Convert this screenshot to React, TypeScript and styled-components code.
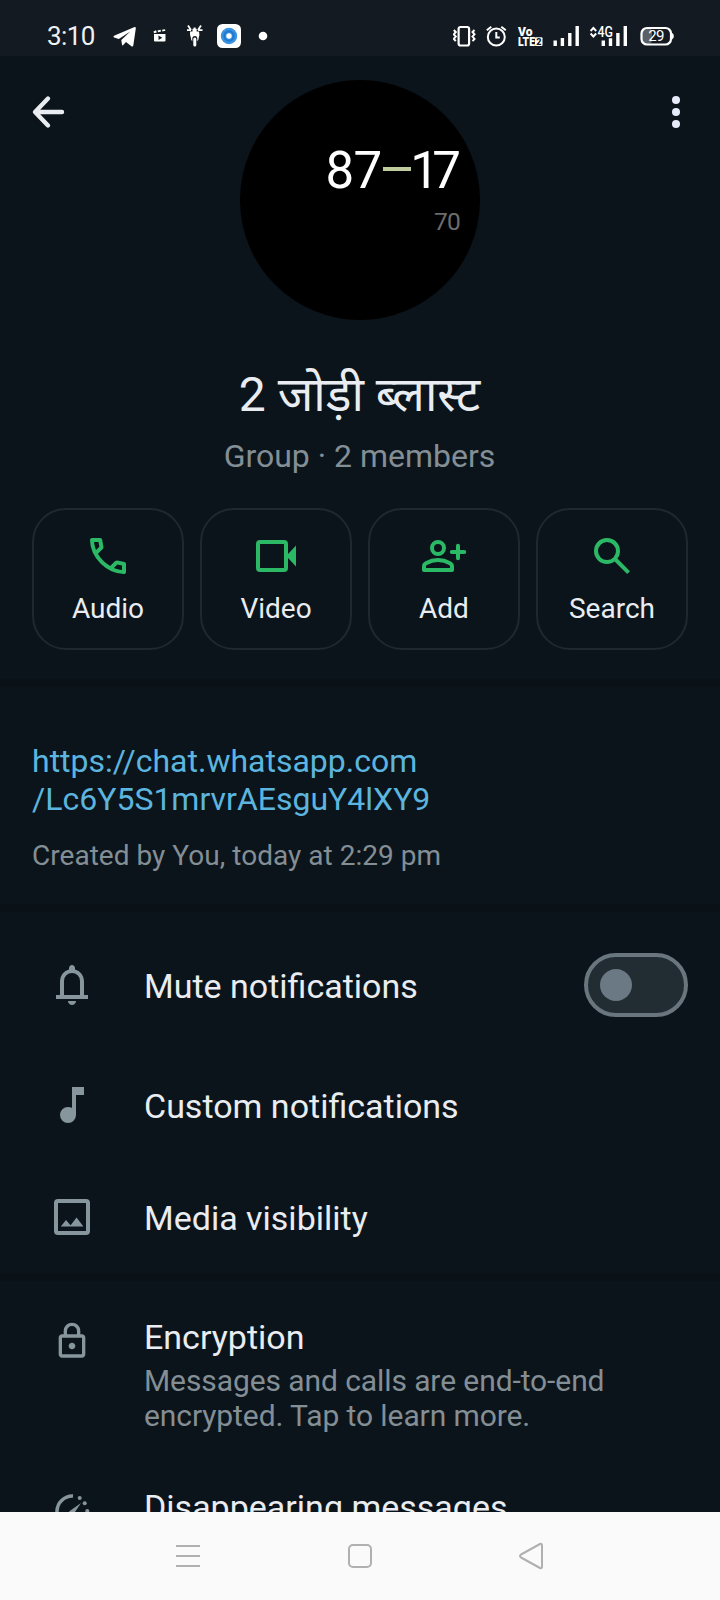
import React from "react";
import styled, { createGlobalStyle } from "styled-components";

const color = {
  bg: "#0c141b",
  status: "#131a21",
  band: "#0a1117",
  outline: "#20282f",
  text: "#e9edf1",
  muted: "#838e95",
  icon: "#87959d",
  green: "#2bb966",
  link: "#5cb5df",
};

const GlobalStyle = createGlobalStyle`
  * { box-sizing: border-box; }
  html, body { margin: 0; padding: 0; background: ${color.bg}; }
  body { overflow: hidden; }
`;

const Screen = styled.div`
  display: flex;
  flex-direction: column;
  width: 720px;
  height: 1600px;
  overflow: hidden;
  background: ${color.bg};
  color: ${color.text};
  font-family: Roboto, "Noto Sans Devanagari", "Noto Sans", sans-serif;
`;

const StatusBar = styled.header`
  flex: none;
  display: flex;
  align-items: center;
  justify-content: space-between;
  height: 56px;
  padding: 16px 44px 0 47px;
  background: ${color.status};
`;

const StatusGroup = styled.div`
  display: flex;
  align-items: center;
  height: 40px;
`;

const Clock = styled.span`
  width: 63px;
  font-size: 26px;
  line-height: 40px;
  letter-spacing: -0.6px;
  color: #eef1f4;
`;

const StatusIcon = styled.svg<{ $gap?: number }>`
  display: block;
  flex: none;
  margin-left: ${(p) => p.$gap ?? 0}px;
`;

const Main = styled.main`
  flex: 1;
  min-height: 0;
  overflow: hidden;
  display: flex;
  flex-direction: column;
`;

const Hero = styled.section`
  flex: none;
  display: flex;
  justify-content: space-between;
  align-items: flex-start;
  height: 264px;
  padding: 24px 20px 0 24px;
`;

const IconButton = styled.button`
  display: grid;
  place-items: center;
  width: 48px;
  height: 64px;
  padding: 0;
  border: 0;
  background: none;
`;

const Avatar = styled.div`
  display: flex;
  flex-direction: column;
  align-items: flex-end;
  width: 240px;
  height: 240px;
  padding: 61px 20px 0 0;
  margin-left: -4px;
  border-radius: 50%;
  background: #000;
`;

const Expression = styled.div`
  display: flex;
  align-items: center;
  font-size: 51px;
  line-height: 60px;
  letter-spacing: -0.8px;
  color: #fff;
`;

const NarrowOne = styled.span`
  letter-spacing: -6.8px;
`;

const MinusBar = styled.i`
  width: 28px;
  height: 4px;
  margin: 0 -1px 5px 2px;
  background: #bfcc9d;
`;

const Result = styled.div`
  margin: 4px 0 0 0;
  font-size: 24.5px;
  line-height: 34px;
  letter-spacing: -0.8px;
  color: #6c6c6c;
`;

const GroupName = styled.h1`
  flex: none;
  margin: 44px 1px 0 0;
  height: 62px;
  font-size: 48px;
  line-height: 62px;
  font-weight: 400;
  text-align: center;
`;

const GroupMeta = styled.p`
  flex: none;
  margin: 10px 1px 0 0;
  font-size: 32px;
  line-height: 40px;
  text-align: center;
  color: ${color.muted};
`;

const Actions = styled.div`
  flex: none;
  display: grid;
  grid-template-columns: repeat(4, 152px);
  gap: 16px;
  padding: 32px 32px 29px;
`;

const ActionCard = styled.button`
  display: flex;
  flex-direction: column;
  align-items: center;
  height: 142px;
  padding: 22px 0 0;
  border: 2px solid ${color.outline};
  border-radius: 34px;
  background: none;
  color: ${color.text};
  font-family: inherit;
  font-size: 28px;
  line-height: 36px;
`;

const ActionLabel = styled.span`
  margin-top: 11px;
`;

const Glyph = styled.svg<{ $size?: number }>`
  display: block;
  flex: none;
  width: ${(p) => p.$size ?? 48}px;
  height: ${(p) => p.$size ?? 48}px;
  fill: currentColor;
`;

const GreenGlyph = styled(Glyph)`
  color: ${color.green};
`;

const Band = styled.div`
  flex: none;
  height: 8px;
  background: ${color.band};
`;

const Description = styled.section`
  flex: none;
  height: 217px;
  padding: 55px 32px 0;
`;

const InviteLink = styled.a`
  display: block;
  font-size: 32px;
  line-height: 38px;
  color: ${color.link};
`;

const Created = styled.p`
  margin: 20px 0 0;
  font-size: 28px;
  line-height: 36px;
  letter-spacing: 0.03px;
  color: ${color.muted};
`;

const Settings = styled.section`
  flex: none;
  display: flex;
  flex-direction: column;
`;

const Row = styled.div<{ $height: number; $top?: number; $align?: string }>`
  display: flex;
  align-items: ${(p) => p.$align ?? "center"};
  height: ${(p) => p.$height}px;
  padding: ${(p) => p.$top ?? 0}px 32px 0 48px;
`;

const IconSlot = styled.div<{ $drop?: number }>`
  flex: none;
  display: flex;
  justify-content: center;
  width: 48px;
  margin: ${(p) => p.$drop ?? 0}px 48px 0 0;
`;

const RowText = styled.div<{ $drop?: number }>`
  flex: 1;
  min-width: 0;
  padding-top: ${(p) => p.$drop ?? 0}px;
`;

const RowTitle = styled.div`
  font-size: 34px;
  line-height: 40px;
`;

const RowDetail = styled.div`
  margin-top: 6px;
  font-size: 30px;
  line-height: 35px;
  letter-spacing: -0.09px;
  color: ${color.muted};
`;

const Switch = styled.span`
  flex: none;
  display: flex;
  align-items: center;
  width: 104px;
  height: 64px;
  padding-left: 12px;
  border: 4px solid #69767e;
  border-radius: 32px;
  background: #212c33;
`;

const Knob = styled.span`
  width: 32px;
  height: 32px;
  border-radius: 50%;
  background: #6a7984;
`;

const NavBar = styled.nav`
  flex: none;
  display: flex;
  justify-content: space-between;
  align-items: center;
  height: 88px;
  padding: 0 174px;
  background: #fafafa;
`;

const NavIcon = styled.svg`
  display: block;
  fill: none;
  stroke: #b0b0b0;
  stroke-width: 2;
  stroke-linejoin: round;
`;

const paths = {
  call: "M19.95 21q-3.125 0-6.175-1.362t-5.55-3.863-3.862-5.55T3 4.05q0-.45.3-.75t.75-.3H8.1q.35 0 .625.238t.325.562l.65 3.5q.05.4-.025.675T9.4 8.45L6.975 10.9q.5.925 1.187 1.787t1.513 1.663q.775.775 1.625 1.438T13.1 17l2.35-2.35q.225-.225.588-.337t.712-.063l3.45.7q.35.1.575.363T21 15.9v4.05q0 .45-.3.75t-.75.3M6.025 9l1.65-1.65L7.25 5H5.025q.125 1.025.35 2.025T6.025 9m8.95 8.95q.975.425 1.988.675T19 18.95v-2.2l-2.35-.475z",
  search:
    "m19.6 21-6.3-6.3q-.75.6-1.725.95T9.5 16q-2.725 0-4.612-1.888T3 9.5t1.888-4.612T9.5 3t4.613 1.888T16 9.5q0 1.1-.35 2.075T14.7 13.3l6.3 6.3zM9.5 14q1.875 0 3.188-1.312T14 9.5t-1.312-3.187T9.5 5 6.313 6.313 5 9.5t1.313 3.188T9.5 14",
  bell: "M4 19v-2h2v-7q0-2.075 1.25-3.687T10.5 4.2v-.7q0-.625.438-1.062T12 2t1.063.438T13.5 3.5v.7q2 .5 3.25 2.113T18 10v7h2v2zm8 3q-.825 0-1.412-.587T10 20h4q0 .825-.587 1.413T12 22m-4-5h8v-7q0-1.65-1.175-2.825T12 6 9.175 7.175 8 10z",
  note: "M10 21q-1.65 0-2.825-1.175T6 17t1.175-2.825T10 13q.575 0 1.063.138t.937.412V3h6v4h-4v10q0 1.65-1.175 2.825T10 21",
  lock: "M6 22q-.825 0-1.412-.587T4 20V10q0-.825.588-1.412T6 8h1V6q0-2.075 1.463-3.537T12 1t3.538 1.463T17 6v2h1q.825 0 1.413.588T20 10v10q0 .825-.587 1.413T18 22zm0-2h12V10H6zm6-3q.825 0 1.413-.587T14 15t-.587-1.412T12 13t-1.412.588T10 15t.588 1.413T12 17M9 8h6V6q0-1.25-.875-2.125T12 3t-2.125.875T9 6z",
};

const PathGlyph = ({ d, size }: { d: string; size?: number }) => (
  <Glyph viewBox="0 0 24 24" $size={size} color={color.icon}>
    <path d={d} fillRule="evenodd" />
  </Glyph>
);

function StatusLeft() {
  return (
    <StatusGroup>
      <Clock>3:10</Clock>
      <StatusIcon $gap={2} width="26" height="24" viewBox="112 24 26 24" fill="#fff">
        <path d="M114 35.8 134 27.3q2-.7 1.800 1.200L133.300 45.500q-.4 1.700-1.900.7L126 42l-3 3.200q-.8.600-1-.5l-.7-4.700 9-8.500-11.500 7.500-4.800-1.600q-1.300-.7 0-1.600z" />
      </StatusIcon>
      <StatusIcon $gap={14} width="16" height="24" viewBox="152 24 16 24" fill="#fff">
        <path d="M153.500 31.500l2.500-1.200.8 2.200-2.800.8zM157.500 30.500l3-.8.6 1.800-3 .8zM162 29.800l3-.6.400 1.600-3 .6z" />
        <path fillRule="evenodd" d="M154 34h11.500v6.500q0 1-1 1H155q-1 0-1-1zm4.500 1.600v4.400l3.800-2.200z" />
      </StatusIcon>
      <StatusIcon $gap={18} width="18" height="24" viewBox="186 24 18 24" fill="#fff">
        <path d="M190 31.500h9q.8 3-.2 6-.3 3.200-1.500 3.800V38q-.4-2-2.300-2-2.500 0-2.700 2v3.300q-1.300-.8-1.500-3.800-1-3-.8-6z" />
        <rect x="193.300" y="37.500" width="3" height="9" rx="1.500" />
        <path d="m188 25.500 3 4.500m10-4.500-3 4.500M187 30.200h4m7 0h4.500M194.600 27.500v3" stroke="#fff" strokeWidth="1.800" />
        <rect x="192.500" y="28.500" width="4.200" height="4" rx="1" />
      </StatusIcon>
      <StatusIcon $gap={13} width="24" height="24" viewBox="0 0 24 24">
        <rect width="24" height="24" rx="5.500" fill="#fff" />
        <circle cx="12" cy="12" r="8.200" fill="#3a92e2" />
        <circle cx="12" cy="12" r="4.700" fill="none" stroke="#1f78cc" strokeWidth="2" />
        <circle cx="12" cy="12" r="2.700" fill="#fff" />
      </StatusIcon>
      <StatusIcon $gap={17} width="10" height="10" viewBox="0 0 10 10">
        <circle cx="5" cy="5" r="4.300" fill="#fff" />
      </StatusIcon>
    </StatusGroup>
  );
}

function StatusRight() {
  return (
    <StatusGroup>
      <StatusIcon width="24" height="24" viewBox="0 0 24 24" fill="none" stroke="#fff">
        <rect x="5.600" y="3" width="10.500" height="18.500" rx="2" strokeWidth="2.200" />
        <path d="m0.800 6 2 2-2 2.300 2 2.300-2 2.300 2 2.200M21.500 6l-2 2 2 2.300-2 2.300 2 2.300-2 2.200" strokeWidth="2" />
      </StatusIcon>
      <StatusIcon $gap={8} width="22" height="24" viewBox="0 0 22 24" fill="none" stroke="#fff" strokeWidth="2">
        <circle cx="11.300" cy="13" r="8.500" />
        <path d="M11.300 8v5.500h3.500M1.800 6.200 6.300 2.800M20.800 6.200 16.300 2.800" />
      </StatusIcon>
      <StatusIcon $gap={10} width="28" height="24" viewBox="0 0 28 24" fill="#fff" fontFamily="Roboto" fontWeight="900">
        <text x="1" y="11.700" fontSize="12.500" textLength="14.500" lengthAdjust="spacingAndGlyphs">Vo</text>
        <text x="1" y="22" fontSize="12.500" textLength="17" lengthAdjust="spacingAndGlyphs">LTE</text>
        <rect x="18" y="13.200" width="7.500" height="8.800" rx="1" />
        <text x="19.300" y="21" fontSize="9" fill={color.status}>2</text>
      </StatusIcon>
      <StatusIcon $gap={7} width="28" height="24" viewBox="0 0 28 24" fill="#fff">
        <path d="M1.500 16.500h3.400V22H1.500zM8.700 14h3.400v8H8.700zM16.100 9h3.400v13h-3.400zM23.500 2h3.400v20h-3.400z" />
      </StatusIcon>
      <StatusIcon $gap={9} width="40" height="24" viewBox="0 0 40 24" fill="#fff" fontFamily="Roboto" fontWeight="500">
        <path d="m1.600 7 2.800-3L7.200 7M1.600 9.500l2.800 3 2.800-3" fill="none" stroke="#fff" strokeWidth="1.900" />
        <text x="8.500" y="12.800" fontSize="15" textLength="15.500" lengthAdjust="spacingAndGlyphs">4G</text>
        <path d="M12.600 16.500H16V22h-3.400zM19.800 14.200h3.400V22h-3.400zM27.200 9h3.400v13h-3.400zM34.600 2H38v20h-3.400z" />
      </StatusIcon>
      <StatusIcon $gap={11} width="36" height="24" viewBox="0 0 36 24" fontFamily="Roboto">
        <rect x="2" y="4" width="10" height="16" rx="4" fill="#596066" />
        <rect x="1.500" y="4" width="29.500" height="16.500" rx="5.500" fill="none" stroke="#fff" strokeWidth="2.200" />
        <path d="M32 9v6.500q1.800-.5 1.800-3.200T32 9z" fill="#fff" />
        <text x="8.300" y="17.400" fontSize="15" fill="#fff" textLength="16.200">29</text>
      </StatusIcon>
    </StatusGroup>
  );
}

export default function App() {
  return (
    <Screen>
      <GlobalStyle />
      <StatusBar>
        <StatusLeft />
        <StatusRight />
      </StatusBar>
      <Main>
        <Hero>
          <IconButton aria-label="Back">
            <Glyph viewBox="0 0 48 48">
              <path d="M38 24H12M24 10.500 11 24l13 13.500" fill="none" stroke={color.text} strokeWidth="4.400" strokeLinecap="round" strokeLinejoin="round" />
            </Glyph>
          </IconButton>
          <Avatar>
            <Expression>
              87
              <MinusBar />
              <span>
                <NarrowOne>1</NarrowOne>7
              </span>
            </Expression>
            <Result>70</Result>
          </Avatar>
          <IconButton aria-label="More options">
            <Glyph viewBox="0 0 48 48" color="#e6ebfa">
              <circle cx="24" cy="12" r="4" />
              <circle cx="24" cy="24" r="4" />
              <circle cx="24" cy="36" r="4" />
            </Glyph>
          </IconButton>
        </Hero>
        <GroupName>2 जोड़ी ब्लास्ट</GroupName>
        <GroupMeta>Group · 2 members</GroupMeta>
        <Actions>
          <ActionCard>
            <GreenGlyph viewBox="0 0 24 24">
              <path d={paths.call} />
            </GreenGlyph>
            <ActionLabel>Audio</ActionLabel>
          </ActionCard>
          <ActionCard>
            <GreenGlyph viewBox="0 0 24 24">
              <rect x="3" y="5" width="14" height="14" rx="1" fill="none" stroke="currentColor" strokeWidth="2" />
              <path d="m17.800 11.200 4.200-4.400v10.400l-4.200-4.400z" />
            </GreenGlyph>
            <ActionLabel>Video</ActionLabel>
          </ActionCard>
          <ActionCard>
            <GreenGlyph viewBox="0 0 24 24">
              <g fill="none" stroke="currentColor" strokeWidth="2" strokeLinejoin="round">
                <circle cx="9" cy="8" r="3" />
                <path d="M2 19v-1.700c0-.8.400-1.400 1-1.700C4.800 14.600 6.900 14 9 14s4.200.6 6 1.600c.6.300 1 .9 1 1.700V19z" />
                <path d="M19 6.900v6.200M15.900 10h6.200" strokeLinecap="round" />
              </g>
            </GreenGlyph>
            <ActionLabel>Add</ActionLabel>
          </ActionCard>
          <ActionCard>
            <GreenGlyph viewBox="0 0 24 24">
              <path d={paths.search} />
            </GreenGlyph>
            <ActionLabel>Search</ActionLabel>
          </ActionCard>
        </Actions>
        <Band />
        <Description>
          <InviteLink>
            https://chat.whatsapp.com
            <br />
            /Lc6Y5S1mrvrAEsguY4lXY9
          </InviteLink>
          <Created>Created by You, today at 2:29 pm</Created>
        </Description>
        <Band />
        <Settings>
          <Row $height={137} $top={9}>
            <IconSlot>
              <PathGlyph d={paths.bell} />
            </IconSlot>
            <RowText $drop={1}>
              <RowTitle>Mute notifications</RowTitle>
            </RowText>
            <Switch>
              <Knob />
            </Switch>
          </Row>
          <Row $height={112}>
            <IconSlot>
              <PathGlyph d={paths.note} />
            </IconSlot>
            <RowText $drop={1}>
              <RowTitle>Custom notifications</RowTitle>
            </RowText>
          </Row>
          <Row $height={112}>
            <IconSlot>
              <Glyph viewBox="0 0 24 24" color={color.icon}>
                <rect x="4" y="4" width="16" height="16" rx="1" fill="none" stroke="currentColor" strokeWidth="2" />
                <path d="m6.400 16.800 2.600-3.300 2.300 2.600 3-3.900 3.400 4.600z" />
              </Glyph>
            </IconSlot>
            <RowText $drop={1}>
              <RowTitle>Media visibility</RowTitle>
            </RowText>
          </Row>
        </Settings>
        <Band />
        <Settings>
          <Row $height={168} $top={36} $align="flex-start">
            <IconSlot $drop={4}>
              <PathGlyph d={paths.lock} size={40} />
            </IconSlot>
            <RowText>
              <RowTitle>Encryption</RowTitle>
              <RowDetail>
                Messages and calls are end-to-end
                <br />
                encrypted. Tap to learn more.
              </RowDetail>
            </RowText>
          </Row>
          <Row $height={96} $top={38} $align="flex-start">
            <IconSlot $drop={1}>
              <Glyph viewBox="0 0 48 48" color={color.icon}>
                <path d="M25 8A15.500 15.500 0 0 0 24 39" fill="none" stroke="currentColor" strokeWidth="3.500" />
                <path d="M21 23.500 33 15l-8 12z" />
                <circle cx="31.700" cy="10" r="2" />
                <circle cx="36.700" cy="15.300" r="2" />
                <circle cx="39.300" cy="23" r="2" />
              </Glyph>
            </IconSlot>
            <RowText>
              <RowTitle>Disappearing messages</RowTitle>
            </RowText>
          </Row>
        </Settings>
      </Main>
      <NavBar>
        <NavIcon width="28" height="28" viewBox="0 0 28 28">
          <path d="M2 4h24M2 14h24M2 24h24" />
        </NavIcon>
        <NavIcon width="28" height="28" viewBox="0 0 28 28">
          <rect x="3" y="3" width="22" height="22" rx="4" />
        </NavIcon>
        <NavIcon width="28" height="28" viewBox="0 0 28 28">
          <path d="M3 12.500 22 2q2-.8 2 1.500v21q0 2.300-2 1.500L3 15.500q-2-1.500 0-3z" />
        </NavIcon>
      </NavBar>
    </Screen>
  );
}
